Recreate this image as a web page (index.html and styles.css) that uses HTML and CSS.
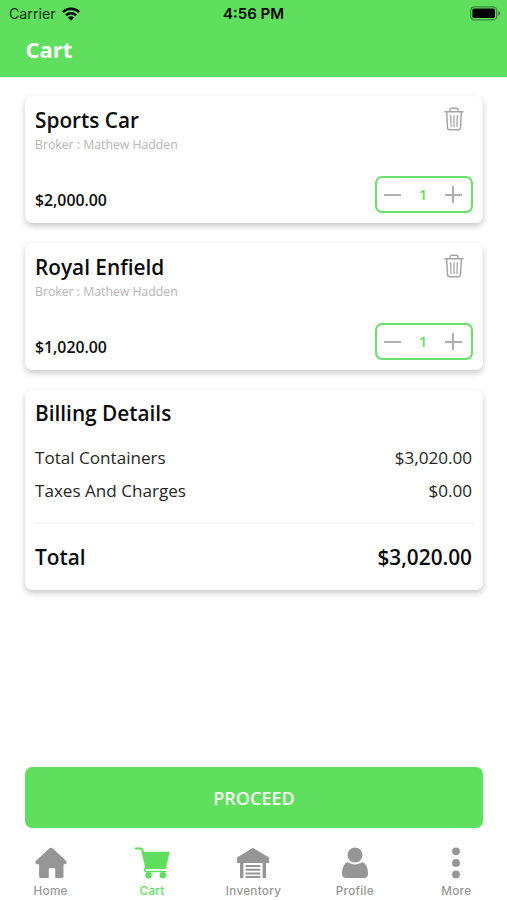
FILE: index.html
```html
<!DOCTYPE html>
<html lang="en">
<head>
<meta charset="utf-8">
<title>Cart</title>
<link rel="stylesheet" href="styles.css">
</head>
<body>
<svg width="0" height="0" class="defs" aria-hidden="true">
  <symbol id="trash" viewBox="0 0 20 24">
    <g fill="none" stroke="#a6a6a6" stroke-width="1.5" stroke-linecap="round" stroke-linejoin="round">
      <path d="M.9 4.800h18.200M6 4.600V3c0-1 .6-1.700 1.600-1.700h4.800c1 0 1.600.7 1.600 1.700v1.600M2.700 5.200l.8 15.600c.1 1.200.9 2 2 2h9c1.100 0 1.900-.8 2-2l.8-15.600"/>
      <path stroke-width="1.300" d="M6.700 8.600l.3 10.800M10 8.600v10.800M13.300 8.600l-.3 10.800"/>
    </g>
  </symbol>
</svg>
<div class="app">
  <header class="header">
    <div class="status">
      <div class="carrier"><span>Carrier</span>
        <svg width="18" height="14" viewBox="0 0 18 14"><g fill="none" stroke="#000" stroke-width="2.4"><path d="M.9 5.100a11.500 11.500 0 0 1 16.200 0"/><path d="M3.900 8.300a7.200 7.200 0 0 1 10.200 0"/></g><path d="M9 13.800L5.900 10.600a4.500 4.500 0 0 1 6.200 0z"/></svg>
      </div>
      <div class="clock">4:56 PM</div>
      <svg class="battery" width="31" height="15" viewBox="0 0 31 15"><rect x=".7" y=".8" width="26" height="13" rx="3.600" fill="none" stroke="#000" stroke-opacity=".38" stroke-width="1.300"/><rect x="2.400" y="2.600" width="22.600" height="9.400" rx="1.800"/><path d="M28.300 5v4.800c1-.3 1.700-1.200 1.700-2.400S29.300 5.300 28.300 5z" fill-opacity=".45"/></svg>
    </div>
    <h1>Cart</h1>
  </header>
  <main class="content">
    <article class="card item">
      <div class="row top"><h2>Sports Car</h2><svg class="trash" width="20" height="24"><use href="#trash"/></svg></div>
      <p class="broker">Broker : Mathew Hadden</p>
      <div class="row bottom"><span class="price">$2,000.00</span>
        <div class="stepper"><i class="minus"></i><span>1</span><i class="plus"></i></div></div>
    </article>
    <article class="card item">
      <div class="row top"><h2>Royal Enfield</h2><svg class="trash" width="20" height="24"><use href="#trash"/></svg></div>
      <p class="broker">Broker : Mathew Hadden</p>
      <div class="row bottom"><span class="price">$1,020.00</span>
        <div class="stepper"><i class="minus"></i><span>1</span><i class="plus"></i></div></div>
    </article>
    <section class="card billing">
      <h2>Billing Details</h2>
      <div class="row line first"><span>Total Containers</span><span>$3,020.00</span></div>
      <div class="row line"><span>Taxes And Charges</span><span>$0.00</span></div>
      <div class="row total"><span>Total</span><span>$3,020.00</span></div>
    </section>
  </main>
  <button class="proceed">PROCEED</button>
  <nav class="tabs">
    <div class="tab"><svg width="36" height="32" viewBox="0 0 36 32"><path d="M16.400 1.300c.9-.8 2.300-.8 3.200 0L33 13.800c1.300 1.300.5 3.400-1.300 3.400h-1.200v11.900c0 1.400-.7 2-2 2h-5.300c-.7 0-1-.4-1-1v-7.300c0-1.200-.6-1.800-1.600-1.800h-3.200c-1 0-1.600.6-1.600 1.800v7.300c0 .6-.3 1-1 1H8.200c-1.300 0-2.100-.6-2.100-2V17.200H4.300c-1.800 0-2.600-2.100-1.300-3.400z"/></svg><span>Home</span></div>
    <div class="tab active"><svg width="36" height="32" viewBox="0 0 36 32"><path d="M1.700 1.500h5c.8 0 1.400.5 1.600 1.300l4 18.500" fill="none" stroke="currentColor" stroke-width="2.200" stroke-linecap="round"/><path d="M9 4.700h26.800L31.900 21H12.500z"/><path d="M31.500 21.300H12.500c-2.500 0-2.500 3.300 0 3.300H31.700" fill="none" stroke="currentColor" stroke-width="1.500" stroke-linecap="round"/><circle cx="14.500" cy="28.200" r="3.200"/><circle cx="28.800" cy="28.200" r="3.200"/></svg><span>Cart</span></div>
    <div class="tab"><svg width="36" height="32" viewBox="0 0 36 32"><path d="M18 .8 33.600 10.300c.3.200.4.400.4.700v5h-3v15h-3.400V16H8.400v15H5V16H2v-5c0-.3.100-.5.400-.7z"/><path d="M11.500 19h13M11.500 22.700h13M11.500 26.400h13M11.500 30h13" stroke="currentColor" stroke-width="2" stroke-linecap="round"/></svg><span>Inventory</span></div>
    <div class="tab"><svg width="36" height="32" viewBox="0 0 36 32"><circle cx="18" cy="8" r="7.500"/><path d="M10.500 15.100c4.700 3.300 10.300 3.300 15 0 3.400 1.600 5.300 5.200 5.500 11.100.1 3.300-1.400 4.900-4.500 4.900h-17C6.400 31.100 4.900 29.500 5 26.200c.2-5.900 2.100-9.500 5.500-11.100z"/></svg><span>Profile</span></div>
    <div class="tab"><svg width="36" height="32" viewBox="0 0 36 32"><circle cx="18" cy="4.300" r="3.900"/><circle cx="18" cy="15.900" r="3.900"/><circle cx="18" cy="27.400" r="3.900"/></svg><span>More</span></div>
  </nav>
</div>
</body>
</html>
```
FILE: styles.css
```css
* { box-sizing: border-box; }
body { margin: 0; background: #fff; font-family: "Open Sans", sans-serif; color: #0c0c0c; }
h1, h2, p { margin: 0; }
.defs { position: absolute; }
.app { width: 507px; height: 900px; display: flex; flex-direction: column; overflow: hidden; }
.header { height: 77px; background: #60df5e; flex: none; }
.status { height: 27px; padding: 0 6px 0 9px; display: grid; grid-template-columns: 1fr auto 1fr; align-items: center; font-family: Inter, sans-serif; font-size: 14.2px; color: #000; }
.carrier { display: flex; align-items: center; gap: 6px; color: #14330f; }
.clock { font-weight: 600; font-size: 15px; margin-right: 3px; }
.battery { justify-self: end; }
h1 { margin-left: 25.5px; font-size: 22px; line-height: 30px; padding-top: 7px; color: #fff; font-weight: 700; }
.content { padding: 19px 24px 0 25px; display: flex; flex-direction: column; gap: 20px; flex: 1; }
.card { background: #fff; border-radius: 7px; padding: 0 10px; box-shadow: 0 3px 6px rgba(0,0,0,.22); }
.row { display: flex; justify-content: space-between; }
h2 { font-size: 20.8px; font-weight: 600; line-height: 28px; }
.item { height: 127px; padding-top: 10px; display: flex; flex-direction: column; }
.item .top { align-items: flex-start; height: 28px; }
.trash { margin: 1px 9px 0 0; }
.broker { font-size: 12.25px; line-height: 17px; margin-top: 2px; color: #b5b5b5; }
.bottom { margin-top: 24px; }
.price { font-size: 15.8px; font-weight: 600; line-height: 22px; margin-top: 12px; }
.stepper { width: 98px; height: 37px; margin-top: -1px; border: 2px solid #69df67; border-radius: 7px; display: flex; align-items: center; justify-content: space-between; padding: 0 9px 0 7px; color: #60df5e; font-size: 15px; font-weight: 600; }
.stepper span { margin-top: -1px; }
.minus, .plus { width: 17px; height: 17px; background: linear-gradient(#b0b0b0, #b0b0b0) center / 17px 2px no-repeat; }
.plus { background: linear-gradient(#b0b0b0, #b0b0b0) center / 17px 2px no-repeat, linear-gradient(#b0b0b0, #b0b0b0) center / 2px 17px no-repeat; }
.billing { height: 200px; padding-top: 9px; }
.line { font-size: 17.1px; line-height: 24px; height: 33px; color: #262626; padding-right: 1px; }
.first { margin-top: 19px; }
.total { margin-top: 10px; border-top: 2px solid #f6f6f6; padding: 19px 1px 0 0; font-size: 20.8px; line-height: 28px; font-weight: 600; }
.proceed { flex: none; width: 458px; height: 61px; margin-left: 25px; border: 0; border-radius: 7px; background: #60df5e; color: #f3fff2; font: 600 18px "Open Sans", sans-serif; }
.tabs { height: 72px; flex: none; display: grid; grid-template-columns: repeat(5, 1fr); padding-top: 19px; }
.tab { display: flex; flex-direction: column; align-items: center; color: #969696; font-family: Inter, sans-serif; font-size: 11.7px; font-weight: 500; line-height: 16px; letter-spacing: .3px; }
.tab span { margin-top: 4px; }
.tab svg { fill: currentColor; }
.active { color: #60df5e; }
```
